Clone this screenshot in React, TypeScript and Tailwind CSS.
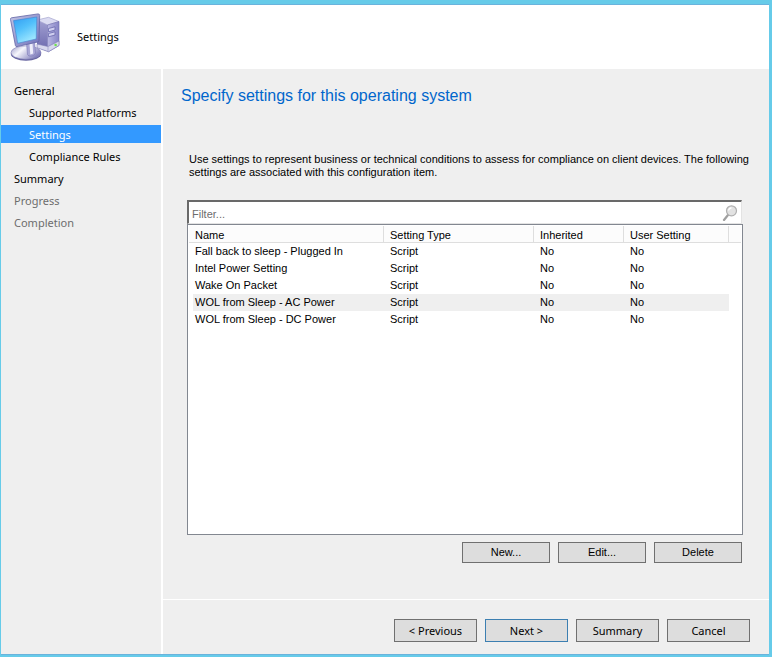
import React, { useState } from 'react';
import clsx from 'clsx';

type Step = { label: string; nested?: boolean; pending?: boolean };

const steps: Step[] = [
    { label: 'General' },
    { label: 'Supported Platforms', nested: true },
    { label: 'Settings', nested: true },
    { label: 'Compliance Rules', nested: true },
    { label: 'Summary' },
    { label: 'Progress', pending: true },
    { label: 'Completion', pending: true },
];

const settings = [
    { name: 'Fall back to sleep - Plugged In', type: 'Script', inherited: 'No', user: 'No' },
    { name: 'Intel Power Setting', type: 'Script', inherited: 'No', user: 'No' },
    { name: 'Wake On Packet', type: 'Script', inherited: 'No', user: 'No' },
    { name: 'WOL from Sleep - AC Power', type: 'Script', inherited: 'No', user: 'No' },
    { name: 'WOL from Sleep - DC Power', type: 'Script', inherited: 'No', user: 'No' },
];

const ComputerIcon = () => (
    <svg className="h-12 w-[50px] shrink-0" viewBox="0 0 50 48" aria-hidden="true">
        <defs>
            <linearGradient id="screen" x1="0" y1="0" x2="0.5" y2="1">
                <stop offset="0" stopColor="#2f9cf2" />
                <stop offset="0.5" stopColor="#52c0fb" />
                <stop offset="1" stopColor="#9ce6ff" />
            </linearGradient>
            <linearGradient id="bezel" x1="0" y1="0" x2="1" y2="1">
                <stop offset="0" stopColor="#c3c5e4" />
                <stop offset="1" stopColor="#7072bb" />
            </linearGradient>
            <linearGradient id="base" x1="0" y1="0" x2="1" y2="0.5">
                <stop offset="0" stopColor="#9c9bc9" />
                <stop offset="0.4" stopColor="#f6f6fc" />
                <stop offset="1" stopColor="#8280bd" />
            </linearGradient>
            <linearGradient id="side" x1="0" y1="0" x2="0" y2="1">
                <stop offset="0" stopColor="#a3a1d2" />
                <stop offset="1" stopColor="#6a67ad" />
            </linearGradient>
            <linearGradient id="front" x1="0" y1="0" x2="1" y2="0">
                <stop offset="0" stopColor="#b9b8e3" />
                <stop offset="1" stopColor="#8684c6" />
            </linearGradient>
        </defs>
        <path d="M27 7 L38.500 4.300 L49 8.500 L37.500 12 Z" fill="#dcdcf2" stroke="#9b9ac8" strokeWidth="0.6" />
        <path d="M27 7 L37.500 12 V38.500 L27 34.500 Z" fill="url(#side)" />
        <path d="M37.500 12 L49 8.500 V32.500 L38.500 38.700 L37.500 38.300 Z" fill="url(#front)" stroke="#716fae" strokeWidth="0.6" />
        <path d="M38.500 15.500 L45 13.800 V17 L38.500 18.800 Z M38.500 20.500 L45 18.800 V22 L38.500 23.800 Z" fill="#cfcff0" stroke="#6a68ad" strokeWidth="0.8" />
        <path d="M27 31 L38 33.500 L49 28 V32.500 L38.500 38.700 L27 34.800 Z" fill="#d8d8ee" stroke="#7c7ab4" strokeWidth="0.6" />
        <path d="M38 33.500 V38.500" stroke="#9c9bc9" strokeWidth="0.7" />
        <circle cx="45.600" cy="32" r="1.300" fill="#6ee04e" />
        <ellipse cx="16" cy="40.800" rx="15.200" ry="6.900" fill="#65639f" />
        <ellipse cx="16" cy="39.600" rx="15" ry="6.700" fill="url(#base)" stroke="#8785bb" strokeWidth="0.6" />
        <path d="M16.500 30 L24.500 28 L25.500 40 C24 43.500 18.500 44 17.500 41.500 Z" fill="#a9a7d6" stroke="#7a79b5" strokeWidth="0.6" />
        <path d="M19.500 31 L22.500 30 L23.200 40.500 L20.300 41.500 Z" fill="#eeeefa" />
        <path d="M1.500 4.800 L28 0.900 Q29.700 0.800 29.700 2.500 L29 27.500 Q29 28.500 28 28.900 L7 33.600 Q5.700 33.800 5.400 32.500 L0.500 6.500 Q0.300 5.100 1.500 4.800 Z" fill="url(#bezel)" stroke="#6264a6" strokeWidth="0.8" />
        <path d="M3.500 7.600 L26.800 4 L26.200 26 L7.700 30.300 Z" fill="url(#screen)" stroke="#4583d0" strokeWidth="0.6" />
    </svg>
);

const SearchIcon = () => (
    <svg className="h-4 w-4 shrink-0" viewBox="0 0 16 16" aria-hidden="true">
        <path d="M6 10 L2 15" stroke="#a0a0a0" strokeWidth="2.2" strokeLinecap="round" />
        <circle cx="9.500" cy="5.800" r="5" fill="#e2e2e2" stroke="#b0b0b0" strokeWidth="1.2" />
        <path d="M6.500 5.500 Q7 3 9.500 2.800" stroke="#ffffff" strokeWidth="1.2" fill="none" />
    </svg>
);

const ActionButton: React.FC<{ label: string }> = ({ label }) => (
    <button type="button" className="h-[21px] w-[88px] border border-[#707070] bg-[#dddddd] text-[11px] leading-[13px]">
        {label}
    </button>
);

const WizardButton: React.FC<{ label: string; primary?: boolean }> = ({ label, primary }) => (
    <button
        type="button"
        className={clsx(
            'h-[23px] w-[83px] border bg-[#dddddd] font-["Noto_Sans",sans-serif] text-[11px] leading-4',
            primary ? 'border-[#3c7fb1]' : 'border-[#707070]'
        )}
    >
        {label}
    </button>
);

export default function App() {
    const [filter, setFilter] = useState('');
    const [selected, setSelected] = useState('WOL from Sleep - AC Power');

    const rows = settings.filter(s => s.name.toLowerCase().includes(filter.toLowerCase()));

    return (
        <div className="flex min-h-screen flex-col border-t-4 border-r-3 border-b-2 border-l border-[#66cbe9] bg-[#efefef] font-['Liberation_Sans',Arial,sans-serif] text-[11px] text-black">
            <header className="flex h-[65px] items-center gap-[17px] border-t border-[#6ab3dc] bg-white pl-[9px]">
                <ComputerIcon />
                <h1 className="font-['Noto_Sans',sans-serif] text-[11px] leading-4">Settings</h1>
            </header>

            <div className="flex flex-1 border-b border-[#6ab3dc]">
                <nav className="flex w-[162px] shrink-0 flex-col gap-1 border-r-2 border-white pt-3 font-['Noto_Sans',sans-serif]">
                    {steps.map(step => (
                        <a
                            key={step.label}
                            href="#"
                            className={clsx(
                                'h-[18px] leading-5',
                                step.nested ? 'pl-7' : 'pl-[13px]',
                                step.pending && 'text-[#6d6d6d]',
                                step.label === 'Settings' && 'bg-[#3399ff] text-white'
                            )}
                        >
                            {step.label}
                        </a>
                    ))}
                </nav>

                <div className="flex min-w-0 flex-1 flex-col">
                    <main className="flex flex-1 flex-col pt-[17px] pr-[26px] pb-9 pl-6">
                        <h2 className="-ml-1.5 text-base leading-5 text-[#0066cc]">Specify settings for this operating system</h2>
                        <p className="mt-[47px] -mr-4 ml-0.5 leading-[13px]">
                            Use settings to represent business or technical conditions to assess for compliance on client devices. The following settings are associated with this configuration item.
                        </p>

                        <label className="mt-[21px] mr-px flex h-6 items-center border-t-2 border-r border-b border-l-2 border-t-[#696969] border-r-[#e3e3e3] border-b-[#e3e3e3] border-l-[#696969] bg-white pr-[3px] pl-[3px]">
                            <input
                                type="text"
                                aria-label="Filter"
                                placeholder="Filter..."
                                value={filter}
                                onChange={e => setFilter(e.target.value)}
                                className="min-w-0 flex-1 pt-0.5 leading-4 outline-none placeholder:text-[#6d6d6d]"
                            />
                            <SearchIcon />
                        </label>

                        <div className="flex-1 border border-[#828790] bg-white p-px">
                            <table className="w-full table-fixed border-separate border-spacing-0 text-left leading-[17px]">
                                <colgroup>
                                    <col className="w-[195px]" />
                                    <col className="w-[150px]" />
                                    <col className="w-[90px]" />
                                    <col className="w-[105px]" />
                                    <col />
                                </colgroup>
                                <thead>
                                    <tr className="bg-[#fcfcfc] leading-[14px]">
                                        {['Name', 'Setting Type', 'Inherited', 'User Setting'].map(title => (
                                            <th key={title} className="border-r border-b border-[#dedede] p-0 pt-0.5 pl-1.5 font-normal">{title}</th>
                                        ))}
                                        <td className="border-b border-[#dedede] p-0" />
                                    </tr>
                                </thead>
                                <tbody>
                                    {rows.map(row => {
                                        const bg = row.name === selected ? 'bg-[#efefef]' : 'bg-white';
                                        return (
                                            <tr key={row.name} onClick={() => setSelected(row.name)}>
                                                <td className="p-0 pl-1">
                                                    <div className={clsx('pl-0.5', bg)}>{row.name}</div>
                                                </td>
                                                <td className={clsx('p-0 pl-1.5', bg)}>{row.type}</td>
                                                <td className={clsx('p-0 pl-1.5', bg)}>{row.inherited}</td>
                                                <td className={clsx('p-0 pl-1.5', bg)}>{row.user}</td>
                                                <td className="p-0" />
                                            </tr>
                                        );
                                    })}
                                </tbody>
                            </table>
                        </div>

                        <div className="mt-[7px] flex justify-end gap-2 pr-px">
                            <ActionButton label="New..." />
                            <ActionButton label="Edit..." />
                            <ActionButton label="Delete" />
                        </div>
                    </main>

                    <footer className="flex justify-end gap-2 border-t border-white pt-[19px] pr-[19px] pb-3">
                        <WizardButton label="< Previous" />
                        <WizardButton label="Next >" primary />
                        <WizardButton label="Summary" />
                        <WizardButton label="Cancel" />
                    </footer>
                </div>
            </div>
        </div>
    );
}
